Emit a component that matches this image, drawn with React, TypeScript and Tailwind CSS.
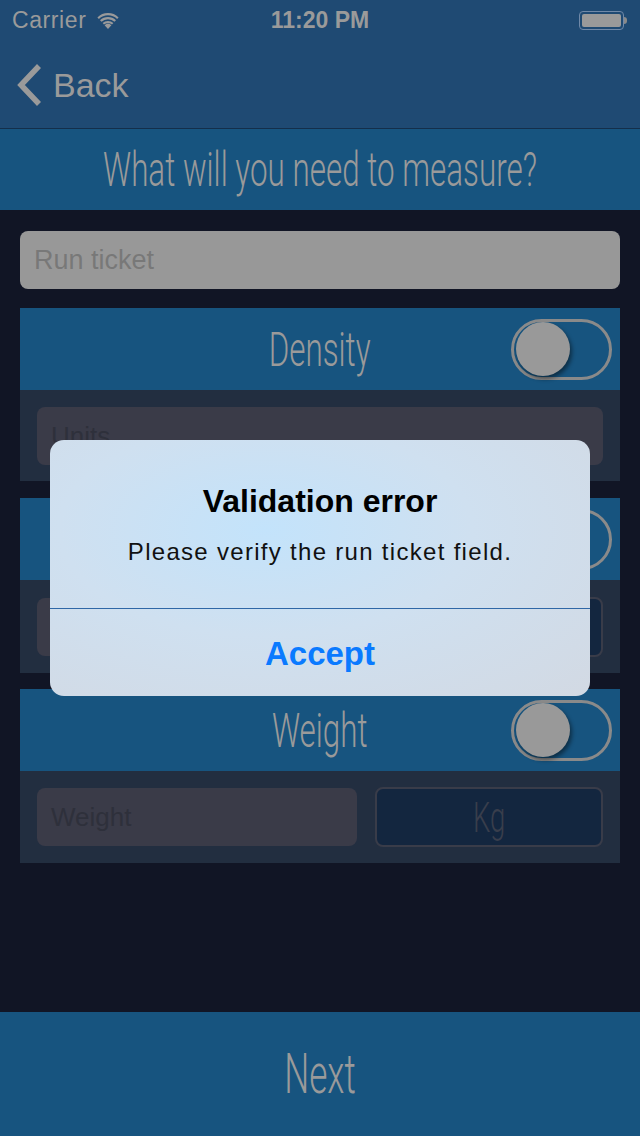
const cond = "inline-block font-['Roboto',sans-serif] font-light scale-x-[0.64] origin-center";
const sans = "font-['Liberation_Sans',Arial,sans-serif]";

const Toggle = () => (
  <div className="w-[101px] h-[61px] rounded-full border-[3px] border-[#8a8a8a] flex items-center p-[2px]">
    <div className="w-[54px] h-[54px] rounded-full bg-[#999999] shadow-[2px_3px_4px_rgba(0,0,0,0.45)]"></div>
  </div>
);

const SectionHeader = ({ label }: { label: string }) => (
  <div className="h-[82px] bg-[#17547f] grid grid-cols-[1fr_auto_1fr] items-center">
    <div></div>
    <span className={`${cond} text-[49px] leading-none text-[#9a9a9a]`}>{label}</span>
    <div className="flex justify-end pr-[8px]">
      <Toggle />
    </div>
  </div>
);

const Field = ({ placeholder }: { placeholder: string }) => (
  <div className={`h-[58px] rounded-lg bg-[#3a3b48] flex items-center px-[14px] ${sans} text-[26px] text-[#2e303b]`}>
    {placeholder}
  </div>
);

const UnitBox = ({ unit }: { unit: string }) => (
  <div className="h-[60px] rounded-lg bg-[#13263f] border-2 border-[#393c49] flex items-center justify-center overflow-hidden">
    <span className={`${cond} text-[43px] leading-none text-[#393e4c]`}>{unit}</span>
  </div>
);

const Wifi = () => (
  <svg width="24" height="17" viewBox="0 0 22 17" fill="#9a9a9a">
    <path d="M11 17 L7.6 13.2 A5 5 0 0 1 14.4 13.2 Z" />
    <path d="M5.6 11 A8 8 0 0 1 16.4 11 L15 12.5 A6 6 0 0 0 7 12.5 Z" />
    <path d="M3 8.2 A11.5 11.5 0 0 1 19 8.2 L17.5 9.8 A9.5 9.5 0 0 0 4.5 9.8 Z" />
    <path d="M0.4 5.4 A15 15 0 0 1 21.6 5.4 L20.1 7 A13 13 0 0 0 1.9 7 Z" />
  </svg>
);

const BackChevron = () => (
  <svg width="30" height="44" viewBox="0 0 30 44" fill="none">
    <path d="M25 3 L7 22 L25 41" stroke="#9a9a9a" strokeWidth="5.5" strokeLinecap="butt" strokeLinejoin="miter" />
  </svg>
);

export default function App() {
  return (
    <div className="relative w-[640px] h-[1136px] bg-[#111525] flex flex-col overflow-hidden">
      {/* status bar + nav */}
      <div className="bg-[#1f4a73] h-[128px] flex flex-col">
        <div className={`h-[40px] flex items-center justify-between px-[12px] ${sans} text-[#9a9a9a]`}>
          <div className="flex items-center gap-[10px] w-[200px]">
            <span className="text-[23px] tracking-[0.6px]">Carrier</span>
            <Wifi />
          </div>
          <span className="text-[23px] font-bold">11:20 PM</span>
          <div className="w-[200px] flex justify-end items-center pr-[1px]">
            <div className="w-[45px] h-[19px] rounded-[4px] border border-[#7089a8] p-[2px]">
              <div className="w-full h-full rounded-[2px] bg-[#9a9a9a]"></div>
            </div>
            <div className="w-[3px] h-[7px] bg-[#8a8a8a] rounded-r-sm"></div>
          </div>
        </div>
        <div className="flex-1 flex items-center pl-[14px] pt-[2px]">
          <BackChevron />
          <span className={`${sans} text-[34px] text-[#9a9a9a] ml-[9px]`}>Back</span>
        </div>
      </div>
      <div className="h-[1px] bg-[#142f4b]"></div>
      <div className="h-[81px] bg-[#17547f] flex items-center justify-center">
        <span className={`${cond} text-[49px] leading-none text-[#9a9a9a] whitespace-nowrap`}>
          What will you need to measure?
        </span>
      </div>

      {/* form */}
      <div className="flex-1 px-[20px] pt-[21px] flex flex-col">
        <div className={`h-[58px] rounded-lg bg-[#989898] flex items-center px-[14px] ${sans} text-[27px] text-[#787878]`}>
          Run ticket
        </div>

        <div className="mt-[19px]">
          <SectionHeader label="Density" />
          <div className="bg-[#222e40] pt-[17px] pb-[16px] px-[17px]">
            <Field placeholder="Units" />
          </div>
        </div>

        <div className="mt-[17px]">
          <SectionHeader label="" />
          <div className="bg-[#222e40] pt-[17px] pb-[16px] px-[17px] grid grid-cols-[320px_1fr] gap-[18px] items-center">
            <Field placeholder="" />
            <UnitBox unit="" />
          </div>
        </div>

        <div className="mt-[16px]">
          <SectionHeader label="Weight" />
          <div className="bg-[#222e40] pt-[16px] pb-[16px] px-[17px] grid grid-cols-[320px_1fr] gap-[18px] items-center">
            <Field placeholder="Weight" />
            <UnitBox unit="Kg" />
          </div>
        </div>
      </div>

      <div className="h-[124px] bg-[#17547f] flex items-center justify-center">
        <span className={`${cond} text-[55px] leading-none text-[#9a9a9a]`}>Next</span>
      </div>

      {/* alert */}
      <div className="absolute left-[50px] top-[440px] w-[540px] h-[256px] rounded-[14px] overflow-hidden bg-[radial-gradient(ellipse_at_40%_35%,#c3e3fb_0%,#cfe0f0_45%,#d2d9e3_100%)] flex flex-col">
        <div className={`h-[168px] flex flex-col items-center pt-[45px] ${sans}`}>
          <span className="text-[32px] font-bold text-black leading-none">Validation error</span>
          <span className="text-[24px] tracking-[1.3px] text-[#111] mt-[23px] leading-none">Please verify the run ticket field.</span>
        </div>
        <div className="h-[1px] bg-[#2f67a6]"></div>
        <div className={`flex-1 flex items-center justify-center pt-[2px] ${sans} text-[33px] font-bold text-[#0a7aff]`}>
          Accept
        </div>
      </div>
    </div>
  );
}
